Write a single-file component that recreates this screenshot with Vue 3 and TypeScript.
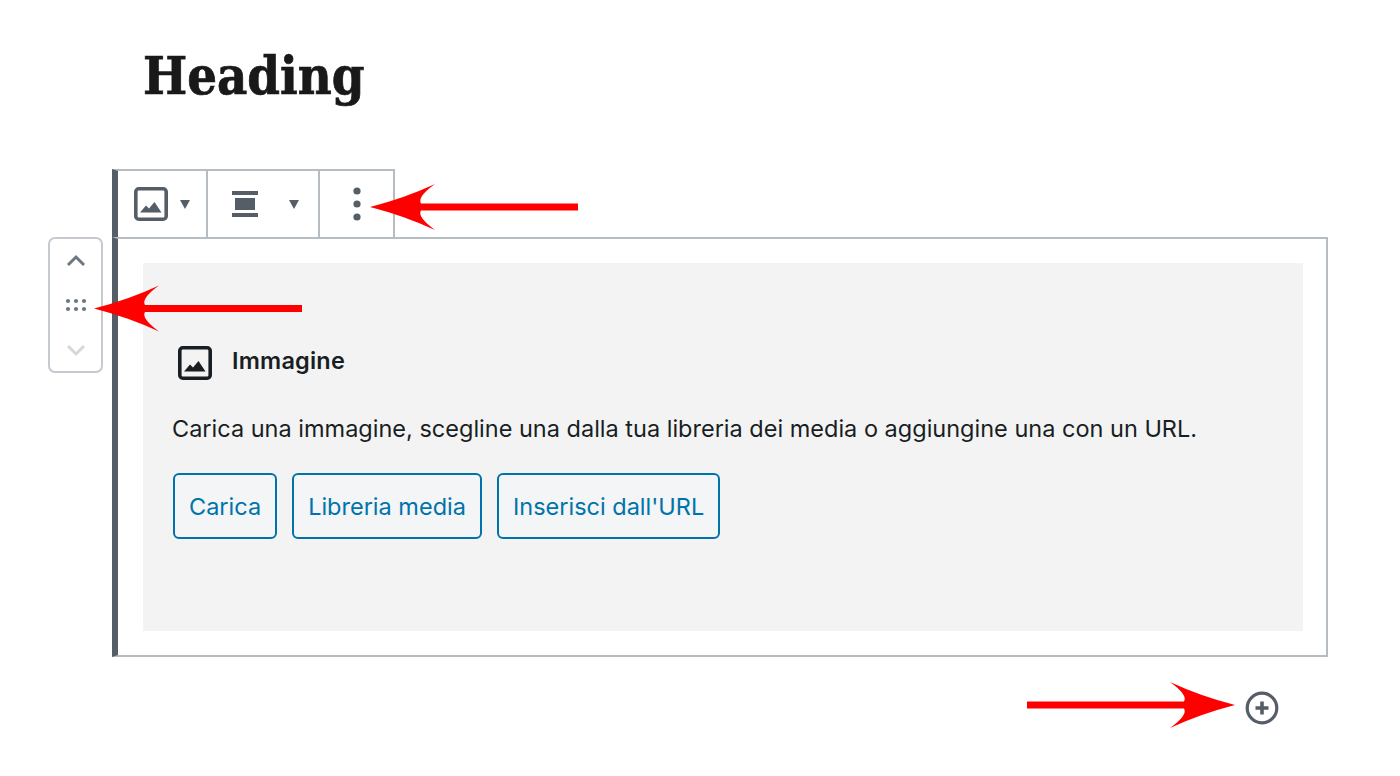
<script setup lang="ts">
interface Arrow {
  x: number;
  y: number;
  flip: boolean;
}

const buttons = ['Carica', 'Libreria media', "Inserisci dall'URL"];

// x,y is the tip of the arrow, the shape itself points left
const arrows: Arrow[] = [
  { x: 370, y: 207, flip: false },
  { x: 94, y: 308.5, flip: false },
  { x: 1235, y: 705, flip: true }
];

const arrowPath =
  'M0 0Q35-9 65-23Q47-10 51-3.5H208V3.5H51Q47 10 65 23Q35 9 0 0Z';

function arrowTransform(a: Arrow) {
  return `translate(${a.x} ${a.y}) scale(${a.flip ? -1 : 1} 1)`;
}
</script>

<template>
  <div class="page">
    <h1 class="heading">Heading</h1>

    <div class="editor">
      <div class="mover">
        <svg class="mover-icon" width="20" height="14" viewBox="0 0 20 14">
          <path d="M2 11l8-8 8 8" fill="none" stroke="#6c7781" stroke-width="3" />
        </svg>
        <svg class="mover-grip" width="22" height="14" viewBox="0 0 22 14">
          <g fill="#6c7781">
            <circle cx="3" cy="3" r="2.1" />
            <circle cx="11" cy="3" r="2.1" />
            <circle cx="19" cy="3" r="2.1" />
            <circle cx="3" cy="11" r="2.1" />
            <circle cx="11" cy="11" r="2.1" />
            <circle cx="19" cy="11" r="2.1" />
          </g>
        </svg>
        <svg class="mover-icon" width="20" height="14" viewBox="0 0 20 14">
          <path d="M2 3l8 8 8-8" fill="none" stroke="#d5d8db" stroke-width="3" />
        </svg>
      </div>

      <div class="block">
        <div class="toolbar">
          <div class="tool tool-image">
            <svg width="34" height="34" viewBox="0 0 34 34">
              <rect x="1.800" y="1.800" width="30.400" height="30.400" rx="3" fill="none" stroke="#555d66" stroke-width="3.600" />
              <path d="M6 25.500l6-7 3 3 5.500-6.500 7 10.500z" fill="#555d66" />
            </svg>
            <span class="caret"></span>
          </div>
          <div class="tool tool-align">
            <svg width="26" height="26" viewBox="0 0 26 26">
              <g fill="#555d66">
                <rect x="0" y="0" width="26" height="4" />
                <rect x="3" y="7" width="20" height="12" />
                <rect x="0" y="22" width="26" height="4" />
              </g>
            </svg>
            <span class="caret"></span>
          </div>
          <div class="tool tool-more">
            <svg width="8" height="34" viewBox="0 0 8 34">
              <g fill="#555d66">
                <circle cx="4" cy="4" r="3.600" />
                <circle cx="4" cy="17" r="3.600" />
                <circle cx="4" cy="30" r="3.600" />
              </g>
            </svg>
          </div>
        </div>

        <div class="box">
          <div class="placeholder">
            <div class="label">
              <svg width="34" height="34" viewBox="0 0 34 34">
                <rect x="1.800" y="1.800" width="30.400" height="30.400" rx="3" fill="none" stroke="#191e23" stroke-width="3.600" />
                <path d="M6 25.500l6-7 3 3 5.500-6.500 7 10.500z" fill="#191e23" />
              </svg>
              <span class="label-text">Immagine</span>
            </div>
            <p class="instructions">
              Carica una immagine, scegline una dalla tua libreria dei media o aggiungine una con un URL.
            </p>
            <div class="actions">
              <button v-for="b in buttons" :key="b" class="btn" type="button">{{ b }}</button>
            </div>
          </div>
        </div>

        <div class="appender">
          <svg width="34" height="34" viewBox="0 0 34 34">
            <circle cx="17" cy="17" r="14.800" fill="none" stroke="#555d66" stroke-width="3.200" />
            <path d="M17 10.500v13M10.500 17h13" fill="none" stroke="#555d66" stroke-width="3.600" />
          </svg>
        </div>
      </div>
    </div>

    <svg class="arrows" width="1400" height="776" viewBox="0 0 1400 776">
      <path
        v-for="(a, i) in arrows"
        :key="i"
        :d="arrowPath"
        :transform="arrowTransform(a)"
        fill="#ff0000"
      />
    </svg>
  </div>
</template>

<style scoped>
.page {
  position: relative;
  width: 1400px;
  height: 776px;
  overflow: hidden;
  background: #fff;
  font-family: Inter, "Noto Sans", sans-serif;
  color: #191e23;
}

.heading {
  margin: 0;
  padding: 45px 0 0 143px;
  height: 169px;
  box-sizing: border-box;
  font-family: "DejaVu Serif Condensed", "DejaVu Serif", serif;
  font-size: 52px;
  line-height: 62px;
  font-weight: 700;
  color: #191919;
  -webkit-text-stroke: 0.700px #191919;
}

.editor {
  display: flex;
  align-items: flex-start;
  padding-left: 48px;
  gap: 9px;
}

.mover {
  width: 55px;
  height: 136px;
  margin-top: 68px;
  box-sizing: border-box;
  border: 2px solid #c4cacf;
  border-radius: 7px;
  display: flex;
  flex-direction: column;
  align-items: center;
  padding-top: 15px;
}

.mover-icon {
  display: block;
}

.mover-grip {
  display: block;
  margin: 30px 0 31px;
}

.block {
  position: relative;
  width: 1216px;
}

.toolbar {
  display: flex;
  height: 68px;
  width: 283px;
  box-sizing: border-box;
  border: 2px solid #b5bcc2;
  border-bottom: 0;
  border-left: 6px solid #555d66;
}

.tool {
  display: flex;
  align-items: center;
  box-sizing: border-box;
  height: 100%;
  border-right: 2px solid #b5bcc2;
}

.tool-image {
  width: 90px;
  padding-left: 16px;
  gap: 12px;
}

.tool-align {
  width: 112px;
  padding-left: 24px;
  gap: 31px;
}

.tool-more {
  flex: 1;
  justify-content: center;
  border-right: 0;
}

.tool svg {
  display: block;
}

.caret {
  width: 0;
  height: 0;
  border-left: 5.500px solid transparent;
  border-right: 5.500px solid transparent;
  border-top: 9px solid #555d66;
  margin-top: 1px;
}

.box {
  height: 420px;
  box-sizing: border-box;
  border: 2px solid #b5bcc2;
  border-left: 6px solid #555d66;
  padding: 24px 23px 24px 25px;
}

.placeholder {
  height: 100%;
  box-sizing: border-box;
  background: #f3f3f4;
  padding: 83px 29px 0 29px;
}

.label {
  display: flex;
  align-items: center;
  gap: 20px;
  margin-left: 6px;
  font-size: 23.500px;
  line-height: 34px;
  font-weight: 600;
  color: #191e23;
}

.label svg {
  display: block;
}

.label-text {
  position: relative;
  top: -2px;
  letter-spacing: 0.200px;
}

.instructions {
  margin: 32px 0 0;
  font-size: 23.500px;
  line-height: 34px;
  color: #191e23;
}

.actions {
  display: flex;
  gap: 15px;
  margin-top: 27px;
  margin-left: 1px;
}

.btn {
  height: 66px;
  box-sizing: border-box;
  padding: 0 14px;
  border: 2px solid #0073aa;
  border-radius: 6px;
  background: #f3f5f6;
  color: #0073aa;
  font-family: inherit;
  font-size: 23.500px;
  white-space: nowrap;
}

.appender {
  display: flex;
  justify-content: flex-end;
  padding: 34px 49px 0 0;
}

.appender svg {
  display: block;
}

.arrows {
  position: absolute;
  top: 0;
  left: 0;
  pointer-events: none;
}
</style>
